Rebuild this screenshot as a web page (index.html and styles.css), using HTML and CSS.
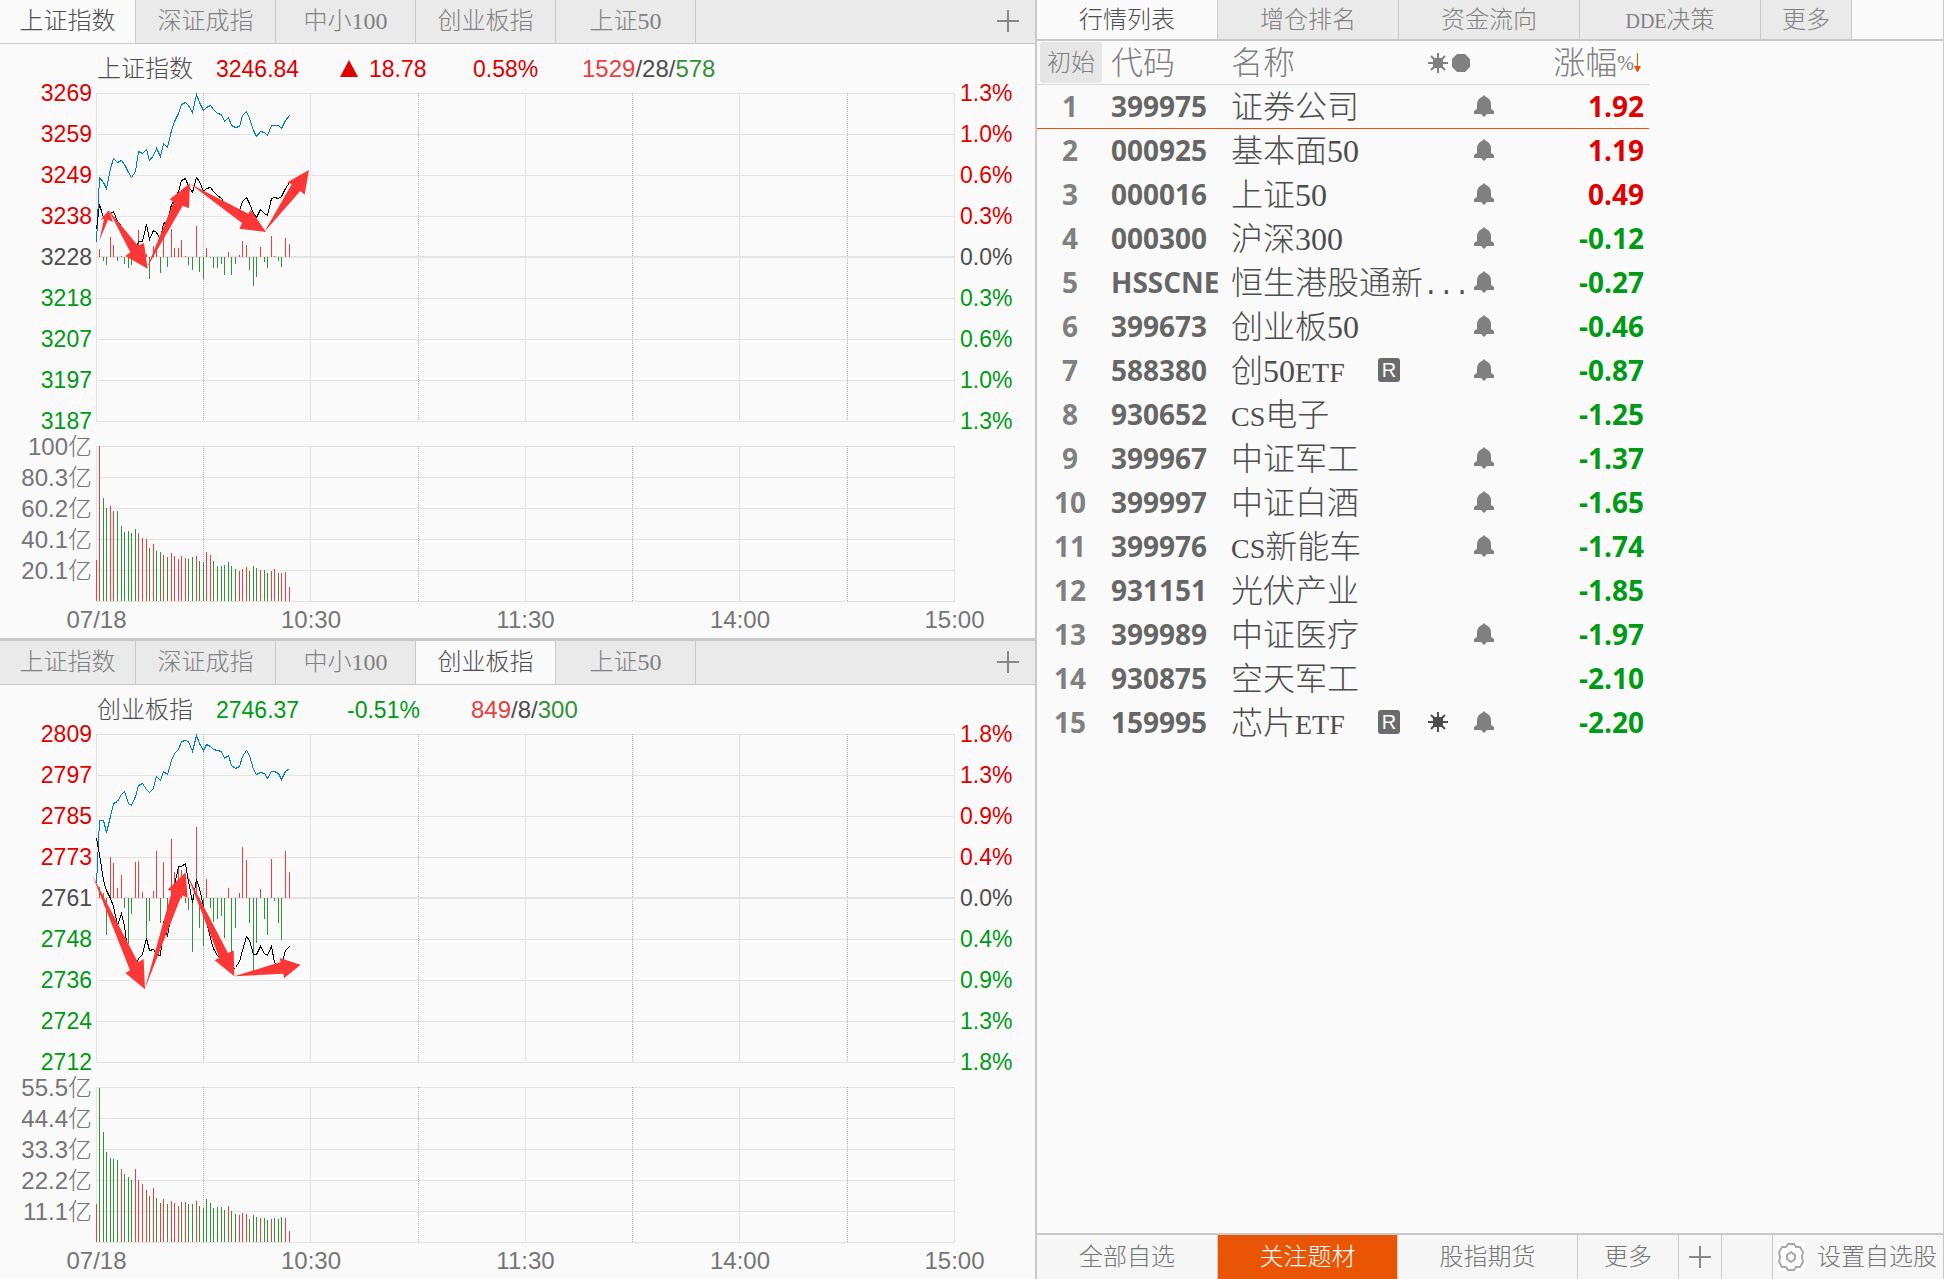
FILE: index.html
```html
<!DOCTYPE html>
<html lang="zh-CN">
<head>
<meta charset="utf-8">
<meta name="viewport" content="width=device-width, initial-scale=1">
<title>行情列表</title>
<link rel="stylesheet" href="styles.css">
</head>
<body>
<svg class="sprite" aria-hidden="true">
  <symbol id="plus" viewBox="0 0 22 22"><path d="M11 0V22M0 11H22" stroke="currentColor" stroke-width="2" fill="none"/></symbol>
  <symbol id="bell" viewBox="0 0 20 22"><path d="M10 0l2 2c3 1 5 4 5 7v5l3 2v3H13l-3 3-3-3H0v-3l3-2V9c0-3 2-6 5-7z" fill="currentColor"/></symbol>
  <symbol id="sun" viewBox="0 0 20 20"><path d="M6 5h8l1 2v7l-2 1H6l-1-1V6z" fill="currentColor"/><path d="M10 0v20M0 10h20M3 3l14 14M17 3L3 17" stroke="currentColor" stroke-width="2" fill="none"/></symbol>
  <symbol id="dot" viewBox="0 0 18 18"><path d="M5 0h8l5 5v8l-5 5H5l-5-5V5z" fill="currentColor"/></symbol>
  <symbol id="gear" viewBox="0 0 28 28"><rect width="28" height="28" fill="#fff"/><path d="M11 1h6l2 3 4 0 3 5-1 5 1 5-3 5-4 0-2 3h-6l-2-3-4 0-3-5 1-5-1-5 3-5 4 0z" fill="none" stroke="#a8a8a8" stroke-width="2"/><path d="M14 9l4 3v4l-4 3-4-3v-4z" fill="none" stroke="#a8a8a8" stroke-width="2"/></symbol>
</svg>
<main class="app">
  <div class="charts">
    <section class="panel">
      <nav class="tabs">
        <button class="tab first active">上证指数</button><button class="tab">深证成指</button><button class="tab">中小100</button><button class="tab">创业板指</button><button class="tab">上证50</button>
        <button class="add" aria-label="添加"><svg class="i22"><use href="#plus"/></svg></button>
      </nav>
      <div class="info rise">
        <span class="name">上证指数</span><span class="up">3246.84</span>
        <span class="up delta"><i class="triangle"></i>18.78</span><span class="up">0.58%</span>
        <span><span class="soft-up">1529</span>/28/<span class="soft-down">578</span></span>
      </div>
      <div class="plot price">
        <ul class="axis left">
          <li class="up">3269</li><li class="up">3259</li><li class="up">3249</li><li class="up">3238</li><li>3228</li><li class="down">3218</li><li class="down">3207</li><li class="down">3197</li><li class="down">3187</li>
        </ul>
        <svg class="chart" data-chart="sh-price" viewBox="0 0 859 329" preserveAspectRatio="none">
          <g class="arrows" transform="translate(-16 -8) scale(.3333)">
            <polygon points="58,467 72,402 62,404 86,376 99,410 84,405"/>
            <polygon points="86,376 174,482 192,474 203,551 136,513 151,502"/>
            <polygon points="200,550 281,351 269,343 330,295 327,370 308,362"/>
            <polygon points="330,296 505,386 512,374 558,441 478,431 486,414"/>
            <polygon points="553,441 635,298 622,292 687,255 674,329 661,318"/>
          </g>
        </svg>
        <ul class="axis right">
          <li class="up">1.3%</li><li class="up">1.0%</li><li class="up">0.6%</li><li class="up">0.3%</li><li>0.0%</li><li class="down">0.3%</li><li class="down">0.6%</li><li class="down">1.0%</li><li class="down">1.3%</li>
        </ul>
      </div>
      <div class="plot volume">
        <ul class="axis left"><li>100亿</li><li>80.3亿</li><li>60.2亿</li><li>40.1亿</li><li>20.1亿</li></ul>
        <svg class="chart" data-chart="sh-volume" viewBox="0 0 859 156" preserveAspectRatio="none"></svg>
      </div>
      <ul class="times"><li>07/18</li><li>10:30</li><li>11:30</li><li>14:00</li><li>15:00</li></ul>
    </section>

    <section class="panel">
      <nav class="tabs">
        <button class="tab first">上证指数</button><button class="tab">深证成指</button><button class="tab">中小100</button><button class="tab active">创业板指</button><button class="tab">上证50</button>
        <button class="add" aria-label="添加"><svg class="i22"><use href="#plus"/></svg></button>
      </nav>
      <div class="info fall">
        <span class="name">创业板指</span><span class="down">2746.37</span><span class="down">-0.51%</span>
        <span><span class="soft-up">849</span>/8/<span class="soft-down">300</span></span>
      </div>
      <div class="plot price">
        <ul class="axis left">
          <li class="up">2809</li><li class="up">2797</li><li class="up">2785</li><li class="up">2773</li><li>2761</li><li class="down">2748</li><li class="down">2736</li><li class="down">2724</li><li class="down">2712</li>
        </ul>
        <svg class="chart" data-chart="cyb-price" viewBox="0 0 859 329" preserveAspectRatio="none">
          <g class="arrows" transform="translate(-16 -9) scale(.3333)">
            <polygon points="37,451 174,712 191,702 195,793 136,744 150,736"/>
            <polygon points="194,793 276,498 263,494 317,442 323,518 305,511"/>
            <polygon points="320,446 444,684 461,676 463,754 404,706 418,698"/>
            <polygon points="463,754 602,711 599,699 662,719 612,760 610,746"/>
          </g>
        </svg>
        <ul class="axis right">
          <li class="up">1.8%</li><li class="up">1.3%</li><li class="up">0.9%</li><li class="up">0.4%</li><li>0.0%</li><li class="down">0.4%</li><li class="down">0.9%</li><li class="down">1.3%</li><li class="down">1.8%</li>
        </ul>
      </div>
      <div class="plot volume">
        <ul class="axis left"><li>55.5亿</li><li>44.4亿</li><li>33.3亿</li><li>22.2亿</li><li>11.1亿</li></ul>
        <svg class="chart" data-chart="cyb-volume" viewBox="0 0 859 156" preserveAspectRatio="none"></svg>
      </div>
      <ul class="times"><li>07/18</li><li>10:30</li><li>11:30</li><li>14:00</li><li>15:00</li></ul>
    </section>
  </div>

  <aside class="quotes">
    <nav class="qtabs">
      <button class="qtab active">行情列表</button><button class="qtab">增仓排名</button><button class="qtab">资金流向</button><button class="qtab"><span class="caps">DDE</span>决策</button><button class="qtab narrow">更多</button>
    </nav>
    <table class="list">
      <colgroup><col class="c-idx"><col class="c-code"><col class="c-name"><col class="c-badge"><col class="c-news"><col class="c-bell"><col class="c-chg"></colgroup>
      <thead>
        <tr><th><button class="reset">初始</button></th><th>代码</th><th colspan="2">名称</th><th colspan="2"><span class="marks"><svg class="i20"><use href="#sun"/></svg><svg class="i18"><use href="#dot"/></svg></span></th><th class="chg"><span class="sort">涨幅<span class="percent">%</span><svg class="desc" viewBox="0 0 7 20"><path d="M3 0h1v13h3l-3 6h-1l-3-6h3z" fill="#e95504"/></svg></span></th></tr>
      </thead>
      <tbody>
        <tr class="selected"><td>1</td><td>399975</td><td>证券公司</td><td></td><td></td><td><svg class="bell"><use href="#bell"/></svg></td><td class="up">1.92</td></tr>
        <tr><td>2</td><td>000925</td><td>基本面50</td><td></td><td></td><td><svg class="bell"><use href="#bell"/></svg></td><td class="up">1.19</td></tr>
        <tr><td>3</td><td>000016</td><td>上证50</td><td></td><td></td><td><svg class="bell"><use href="#bell"/></svg></td><td class="up">0.49</td></tr>
        <tr><td>4</td><td>000300</td><td>沪深300</td><td></td><td></td><td><svg class="bell"><use href="#bell"/></svg></td><td class="down">-0.12</td></tr>
        <tr><td>5</td><td>HSSCNE</td><td colspan="3">恒生港股通新<span class="dots">...</span></td><td><svg class="bell"><use href="#bell"/></svg></td><td class="down">-0.27</td></tr>
        <tr><td>6</td><td>399673</td><td>创业板50</td><td></td><td></td><td><svg class="bell"><use href="#bell"/></svg></td><td class="down">-0.46</td></tr>
        <tr><td>7</td><td>588380</td><td>创50<span class="latin">ETF</span></td><td><span class="badge">R</span></td><td></td><td><svg class="bell"><use href="#bell"/></svg></td><td class="down">-0.87</td></tr>
        <tr><td>8</td><td>930652</td><td><span class="latin">CS</span>电子</td><td></td><td></td><td></td><td class="down">-1.25</td></tr>
        <tr><td>9</td><td>399967</td><td>中证军工</td><td></td><td></td><td><svg class="bell"><use href="#bell"/></svg></td><td class="down">-1.37</td></tr>
        <tr><td>10</td><td>399997</td><td>中证白酒</td><td></td><td></td><td><svg class="bell"><use href="#bell"/></svg></td><td class="down">-1.65</td></tr>
        <tr><td>11</td><td>399976</td><td><span class="latin">CS</span>新能车</td><td></td><td></td><td><svg class="bell"><use href="#bell"/></svg></td><td class="down">-1.74</td></tr>
        <tr><td>12</td><td>931151</td><td>光伏产业</td><td></td><td></td><td></td><td class="down">-1.85</td></tr>
        <tr><td>13</td><td>399989</td><td>中证医疗</td><td></td><td></td><td><svg class="bell"><use href="#bell"/></svg></td><td class="down">-1.97</td></tr>
        <tr><td>14</td><td>930875</td><td>空天军工</td><td></td><td></td><td></td><td class="down">-2.10</td></tr>
        <tr><td>15</td><td>159995</td><td>芯片<span class="latin">ETF</span></td><td><span class="badge">R</span></td><td><svg class="i20 news"><use href="#sun"/></svg></td><td><svg class="bell"><use href="#bell"/></svg></td><td class="down">-2.20</td></tr>
      </tbody>
    </table>
    <footer class="groups">
      <button class="group">全部自选</button><button class="group active">关注题材</button><button class="group">股指期货</button><button class="group more">更多</button>
      <button class="group new" aria-label="新建分组"><svg class="i22"><use href="#plus"/></svg></button>
      <span class="gap"></span>
      <button class="settings"><svg class="gear"><use href="#gear"/></svg>设置自选股</button>
    </footer>
  </aside>
</main>
<script src="charts.js"></script>
</body>
</html>
```

FILE: styles.css
```css
* { box-sizing: border-box; }
body {
  margin: 0;
  background: #fafafa;
  color: #4d4d4d;
  font: 300 24px/28px "Liberation Sans", "Noto Sans CJK SC", sans-serif;
}
ul { list-style: none; margin: 0; padding: 0; }
button {
  margin: 0; padding: 0; border: 0; background: none; color: inherit;
  font: 300 24px/28px "Liberation Serif", "Noto Sans CJK SC", serif;
  white-space: nowrap; cursor: pointer;
}
svg { display: block; }
.sprite { position: absolute; width: 0; height: 0; }
.i22 { width: 22px; height: 22px; }
.i20 { width: 20px; height: 20px; }
.i18 { width: 18px; height: 18px; }

.up { color: #e00000; }
.down { color: #009a17; }
.soft-up { color: #e84040; }
.soft-down { color: #33913a; }

.app {
  display: grid;
  grid-template-columns: minmax(0, 1fr) min(907px, 50%);
  min-height: 100vh;
}
.charts { border-right: 2px solid #c9c9c9; }

/* index panels */
.panel + .panel { border-top: 3px solid #c9c9c9; }
.tabs {
  display: flex; height: 44px;
  background: #eaeaea; border-bottom: 1px solid #c9c9c9;
}
.tab { width: 140px; padding-bottom: 2px; border-right: 1px solid #c9c9c9; color: #808080; }
.tab.first { width: 136px; }
.tab.active { background: #fafafa; color: #4d4d4d; }
.add { margin-left: auto; padding: 0 16px 2px; color: #888; }
.info { display: grid; height: 49px; padding-left: 97px; align-items: center; }
.info.rise { grid-template-columns: 119px 124px 133px 109px auto; }
.info.fall { grid-template-columns: 119px 131px 124px auto; }
.info > .up, .info > .down { font-size: 23px; }
.delta { display: flex; align-items: center; gap: 11px; }
.triangle {
  border: solid transparent; border-width: 0 9px 17px;
  border-bottom-color: #e00000;
}

.plot { display: grid; grid-template-columns: 96px minmax(0, 1fr) 80px; }
.price { grid-template-rows: 329px; margin-bottom: 24px; }
.volume { grid-template-rows: 156px; }
.price .axis { margin-top: -20px; font-size: 23px; }
.price .axis li { height: 41px; line-height: 41px; }
.volume .axis { margin-top: -15px; }
.volume .axis li { height: 31px; line-height: 31px; color: #757575; }
.axis.left { text-align: right; padding-right: 4px; }
.axis.right { padding-left: 5px; }
.times {
  display: flex; justify-content: space-between;
  height: 36px; margin: 0 80px 0 96px; align-items: center; color: #757575;
}
.times li { display: flex; justify-content: center; width: 1px; }

.chart { width: 100%; height: 100%; overflow: visible; }
.chart path, .chart polyline { fill: none; stroke-width: 1; vector-effect: non-scaling-stroke; shape-rendering: crispEdges; }
.chart .grid { stroke: #e3e3e3; }
.chart .zero { stroke: #e3e3e3; stroke-width: 2; }
.chart .half { stroke: #b0b0b0; stroke-dasharray: 1 1; }
.chart .rise { stroke: #e84040; }
.chart .fall { stroke: #33913a; }
.chart .lead { stroke: #0078d0; }
.chart .index { stroke: #000; }
.arrows { fill: #fc3737; }

/* quote list */
.quotes { display: flex; flex-direction: column; border-right: 1px solid #c9c9c9; }
.qtabs { display: flex; height: 41px; border-bottom: 2px solid #c9c9c9; }
.qtab { width: 181px; background: #eaeaea; border-right: 1px solid #c9c9c9; color: #808080; }
.qtab.narrow { width: 91px; }
.qtab.active { background: #fafafa; color: #4d4d4d; }
.caps { font-size: 20px; line-height: 0; }

.list { width: 612px; table-layout: fixed; border-collapse: separate; border-spacing: 0; }
.c-idx { width: 66px; }
.c-code { width: 120px; }
.c-name { width: 147px; }
.c-badge { width: 50px; }
.c-news { width: 50px; }
.c-bell { width: 30px; }
.list th, .list td { height: 44px; padding: 0 0 0 8px; text-align: left; white-space: nowrap; }
.list th {
  border-bottom: 1px solid #d9d9d9; color: #808080;
  font: 300 32px/32px "Liberation Serif", "Noto Sans CJK SC", serif;
}
.list th:first-child { padding: 0 0 0 3px; }
.reset { display: block; width: 62px; height: 41px; background: #e6e6e6; border-radius: 3px; color: #808080; }
.marks { display: flex; align-items: center; gap: 4px; }
.list .chg { padding: 0 8px 0 0; }
.sort { display: flex; align-items: center; justify-content: flex-end; }
.percent { font-size: 20px; }
.desc { width: 7px; height: 20px; }
.list td { padding-bottom: 2px; font: 700 28px/32px "Open Sans", "Noto Sans", sans-serif; }
.list td:first-child { padding: 0 0 2px; text-align: center; color: #808080; }
.list td:nth-child(2) { color: #666; }
.list td:nth-child(3) { padding-bottom: 0; font: 300 32px/32px "Liberation Serif", "Noto Sans CJK SC", serif; }
.list td:last-child { padding: 0 5px 2px 0; text-align: right; }
.list .selected td { border-bottom: 1px solid #e95504; }
.latin { font-size: 28px; line-height: 0; }
.dots { font-family: "Liberation Mono", monospace; font-size: 26px; line-height: 0; }
.bell { width: 20px; height: 22px; margin-left: -4px; color: #808080; }
.news { color: #4d4d4d; }
.badge {
  display: block; width: 22px; height: 24px; border-radius: 3px;
  background: #6b6b6b; color: #fff; text-align: center;
  font: 400 20px/24px "Liberation Sans", sans-serif;
}

.groups {
  display: flex; height: 46px; margin-top: auto;
  background: #f6f6f6; border-top: 2px solid #c9c9c9; color: #757575;
}
.group { width: 180px; border-right: 1px solid #c9c9c9; }
.group:first-child { width: 181px; }
.group.active { background: #e95504; color: #fff; }
.group.more { width: 101px; }
.group.new { display: flex; width: 43px; align-items: center; justify-content: center; color: #888; }
.gap { flex: 1; border-right: 1px solid #c9c9c9; }
.settings { display: flex; width: 170px; align-items: center; gap: 12px; padding-left: 4px; }
.gear { width: 28px; height: 28px; }
```

FILE: charts.js
```js
// One entry per traded minute. Bars: positive is red, negative is green.
const data = {
  "sh-price": {
    lead: [149,84,89,95,75,65,69,67,71,79,84,78,58,60,56,67,62,55,63,50,54,37,28,20,11,9,12,19,1,9,17,14,12,16,20,21,28,24,32,34,33,22,18,25,37,43,38,39,42,32,32,32,35,27,22],
    index: [136,111,124,127,120,118,128,133,140,148,155,157,148,148,131,146,137,139,146,130,128,111,107,98,87,85,93,99,84,88,98,95,94,98,102,105,110,114,118,123,117,108,104,110,120,124,116,120,122,105,104,105,103,95,89],
    bars: [0,8,-4,-8,20,12,-4,1,-7,-11,-8,0,27,0,3,-22,11,12,-16,20,-10,28,9,9,17,1,-8,-13,31,-15,-22,9,-1,-11,-11,-7,-18,5,-18,-7,2,16,12,-13,-29,-20,10,-5,-11,21,1,-4,-10,19,13]
  },
  "cyb-price": {
    lead: [149,86,86,98,82,69,67,60,57,69,71,62,51,49,55,58,54,42,46,37,40,26,19,15,7,6,7,17,1,9,16,10,12,15,16,17,24,21,31,34,32,22,16,21,35,40,38,39,44,37,37,39,45,37,34],
    index: [104,120,146,156,164,172,191,179,191,224,236,231,224,220,204,216,215,220,221,187,202,177,151,132,132,129,147,168,145,154,172,187,204,214,221,224,231,234,236,233,227,216,202,206,220,220,212,219,221,212,228,232,231,216,212],
    bars: [0,11,5,-37,41,35,10,23,-10,-46,-16,36,37,6,-40,-23,7,47,-25,36,-27,59,26,30,28,-5,-12,-54,71,-30,-48,19,-10,-24,-21,-18,-40,10,-60,-30,5,51,38,-25,-73,-45,9,-21,-37,39,-3,-25,-42,47,26]
  },
  "sh-volume": {
    bars: [41,155,-103,-93,95,90,-90,-75,-69,-70,-68,-72,68,63,62,-53,57,-50,-49,46,-44,48,45,42,45,43,-42,-44,45,-40,-39,49,46,-40,-35,-35,-36,-39,-35,-32,30,32,34,-30,-35,-33,31,-31,-28,30,32,-28,28,29,14]
  },
  "cyb-volume": {
    bars: [38,-154,-110,-90,-84,-83,-82,73,-68,-65,-62,73,62,58,52,-46,54,-44,39,43,-38,41,39,36,-40,40,-38,-38,41,-36,-34,-43,-39,-34,-35,-35,-32,36,-31,-28,27,29,28,-23,-27,-25,24,-24,-22,23,-24,-23,-25,24,11]
  }
};

const WIDTH = 858;
const minuteX = i => Math.floor(i * WIDTH / 240) + 0.5;

function add(svg, tag, cls, attr, value) {
  const el = document.createElementNS("http://www.w3.org/2000/svg", tag);
  el.setAttribute("class", cls);
  el.setAttribute(attr, value);
  svg.insertBefore(el, svg.querySelector(".arrows"));
}

document.querySelectorAll("[data-chart]").forEach(svg => {
  const set = data[svg.dataset.chart];
  const isPrice = Boolean(set.lead);
  const step = isPrice ? 41 : 31;
  const rows = isPrice ? 8 : 5;
  const bottom = step * rows;
  let grid = "", half = "";
  for (let r = 0; r <= rows; r++) grid += `M0 ${r * step + 0.5}H${WIDTH + 1}`;
  for (let c = 0; c <= 8; c++) {
    const line = `M${Math.round(c * WIDTH / 8 - 0.1) + 0.5} 0V${bottom}`;
    if (c % 2) half += line; else grid += line;
  }
  add(svg, "path", "grid", "d", grid);
  add(svg, "path", "half", "d", half);

  const base = isPrice ? 164 : bottom;
  if (isPrice) add(svg, "path", "zero", "d", `M0 ${base}H${WIDTH}`);
  let rise = "", fall = "";
  set.bars.forEach((v, i) => {
    if (!v) return;
    const top = base - (isPrice ? v : Math.abs(v));
    const bar = `M${minuteX(i)} ${base}V${top}`;
    if (v > 0) rise += bar; else fall += bar;
  });
  add(svg, "path", "rise", "d", rise);
  add(svg, "path", "fall", "d", fall);
  if (isPrice) {
    ["lead", "index"].forEach(k =>
      add(svg, "polyline", k, "points", set[k].map((y, i) => `${minuteX(i)},${y + 0.5}`).join(" ")));
  }
});
```
